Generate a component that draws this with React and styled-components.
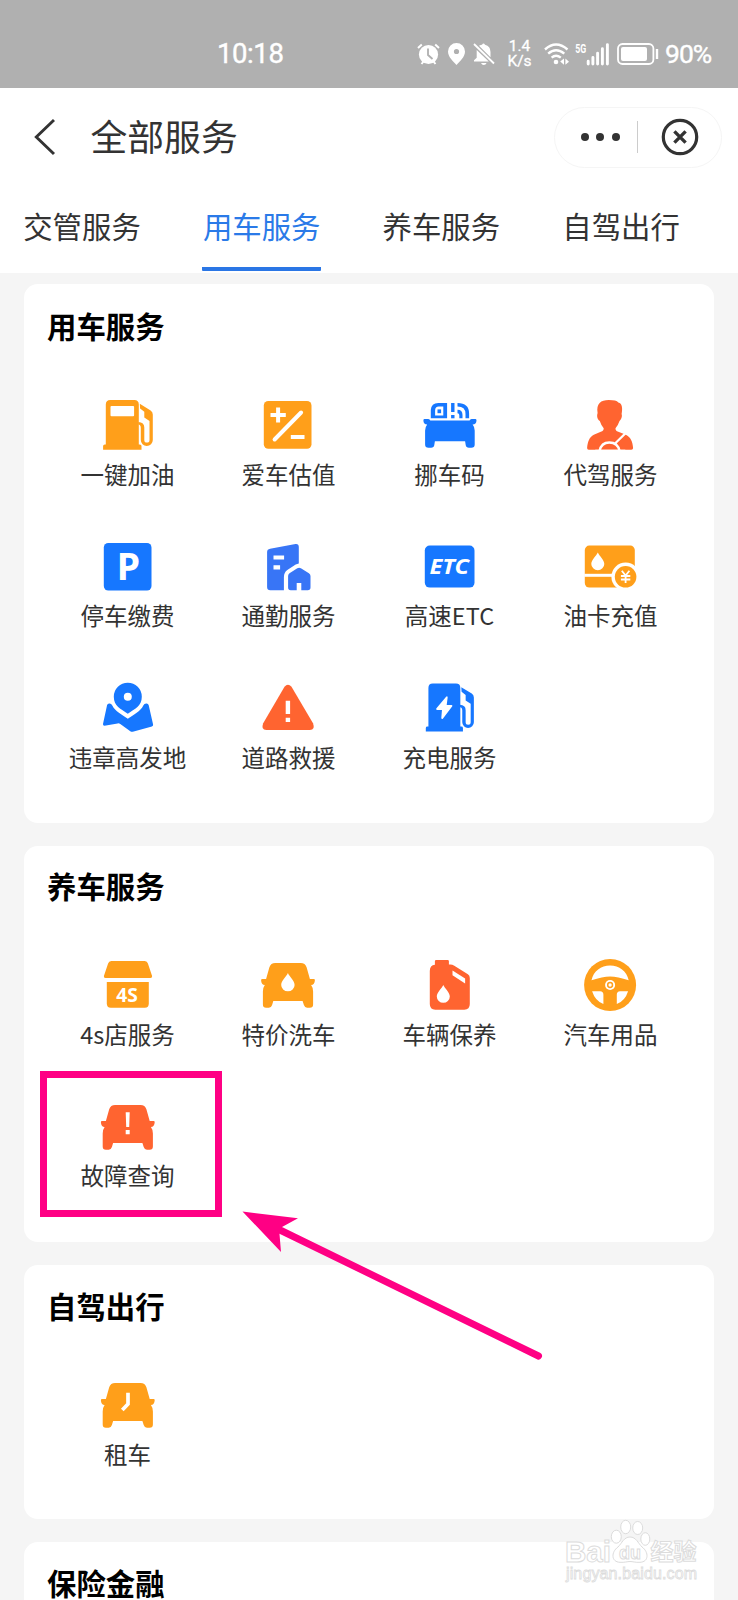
import React, { useState } from "react";
import styled, { createGlobalStyle } from "styled-components";

const ORANGE = "#ff9f1a";
const RED = "#ff6430";
const BLUE = "#1677ff";

const GlobalStyle = createGlobalStyle`
   * {
      box-sizing: border-box;
   }
   body {
      margin: 0;
      background-color: #f5f5f5;
      font-family: "Noto Sans CJK SC", sans-serif;
   }
`;

const PageStyle = {
   Wrap: styled.div`
      position: relative;
      width: 738px;
      height: 1600px;
      overflow: hidden;
      background-color: #f5f5f5;
      color: #333;
   `,
   Overlay: styled.svg`
      position: absolute;
      top: 0;
      left: 0;
      pointer-events: none;
   `,
};

const StatusStyle = {
   Bar: styled.div`
      height: 88px;
      padding: 19px 26px 0 217px;
      background-color: #b0b0b0;
      color: #fff;
      font-family: Roboto, sans-serif;
      display: flex;
      align-items: center;
      svg {
         display: block;
         flex: none;
      }
   `,
   Time: styled.div`
      flex: 1;
      font-size: 27.5px;
      line-height: 32px;
      letter-spacing: -0.4px;
      -webkit-text-stroke: 0.4px #fff;
   `,
   Tray: styled.div`
      display: flex;
      align-items: center;
      gap: 8px;
   `,
   Speed: styled.div`
      width: 25px;
      margin: 0 4px;
      display: flex;
      flex-direction: column;
      align-items: center;
      font-size: 15.5px;
      line-height: 16px;
      white-space: nowrap;
      -webkit-text-stroke: 0.3px #fff;
      span:last-child {
         margin-top: -1px;
      }
   `,
   Signal: styled.svg`
      margin-left: -2px;
   `,
   Percent: styled.div`
      width: 47px;
      margin-left: -2px;
      font-size: 26.5px;
      line-height: 32px;
      letter-spacing: -1px;
      white-space: nowrap;
      -webkit-text-stroke: 0.4px #fff;
   `,
};

const HeaderStyle = {
   Wrap: styled.header`
      height: 185px;
      background-color: #fff;
   `,
   Top: styled.div`
      height: 98px;
      padding: 0 16px 0 33px;
      display: flex;
      align-items: center;
   `,
   Title: styled.h1`
      flex: 1;
      margin: -4px 0 0 33.5px;
      font-size: 36.8px;
      line-height: 44px;
      font-weight: 400;
   `,
   Capsule: styled.div`
      width: 168px;
      height: 61px;
      border: 1px solid #f5f5f5;
      border-radius: 31px;
      display: flex;
      align-items: center;
   `,
   More: styled.div`
      width: 82px;
      padding-left: 8px;
      display: flex;
      justify-content: center;
      gap: 7.5px;
      i {
         width: 8px;
         height: 8px;
         border-radius: 50%;
         background-color: #333;
      }
   `,
   Close: styled.div`
      flex: 1;
      height: 32px;
      border-left: 1px solid #ccc;
      display: flex;
      align-items: center;
      justify-content: center;
   `,
   Tabs: styled.nav`
      height: 87px;
      padding-left: 22.5px;
      display: flex;
      gap: 60.7px;
   `,
   Tab: styled.button`
      width: 119px;
      height: 85px;
      padding: 17px 0 0;
      border: 0;
      border-bottom: 4px solid ${({ $active }) => ($active ? "#2a76e5" : "transparent")};
      border-radius: 1px;
      background: none;
      color: ${({ $active }) => ($active ? "#2a7ae8" : "#333")};
      font-family: inherit;
      font-size: 29.4px;
      line-height: 44px;
      white-space: nowrap;
      display: flex;
      justify-content: center;
      cursor: pointer;
   `,
};

const CardStyle = {
   List: styled.main`
      padding: 11px 24px 0;
   `,
   Card: styled.section`
      height: ${({ $height }) => $height}px;
      margin-bottom: 23px;
      padding: ${({ $top }) => $top}px 23px 0;
      border-radius: 14px;
      background-color: #fff;
   `,
   Title: styled.h2`
      margin: 0 0 50px;
      font-size: 29.4px;
      line-height: 40px;
      font-weight: 700;
      color: #000;
   `,
   Grid: styled.div`
      display: grid;
      grid-template-columns: repeat(4, 161px);
      grid-auto-rows: 141.7px;
   `,
   Item: styled.div`
      position: relative;
      display: flex;
      flex-direction: column;
      align-items: center;
      svg {
         display: block;
      }
   `,
   Label: styled.span`
      margin-top: 1.6px;
      font-size: 23.5px;
      line-height: 34px;
      white-space: nowrap;
   `,
   Mark: styled.div`
      position: absolute;
      top: -25.5px;
      left: -7px;
      width: 182px;
      height: 146px;
      border: 7px solid #ff0084;
   `,
};

function Drop({ x, y, s = 1 }) {
   return (
      <path
         transform={`translate(${x} ${y}) scale(${s})`}
         fill="#fff"
         d="M0 -9 C1.5 -5.5 6.5 -1.5 6.5 2.5 A6.5 6.3 0 0 1 -6.5 2.5 C-6.5 -1.5 -1.5 -5.5 0 -9Z"
      />
   );
}

function Pump({ color, children }) {
   return (
      <g fill={color}>
         <path d="M8.5 9.5 Q8.5 5 13 5 H37 Q41.5 5 41.5 9.5 V49.5 H42.5 Q44.2 49.5 44.2 51 V54.7 H5.8 V51 Q5.8 49.5 7.5 49.5 H8.5Z" />
         <path d="M42.5 8.8 L53.3 15.4 Q55.5 16.8 55.5 19.4 V45 A6 6 0 0 1 43.5 45 V33 Q43.5 29.5 41 29.5 V27 Q47 27.2 47 32.5 V45 A2.6 2.6 0 0 0 52.2 45 V26 L47 22.5 V16.8 L42.8 13.6Z" />
         {children}
      </g>
   );
}

function Car({ color, dx = 0.8, children }) {
   return (
      <g>
         <path
            transform={`translate(${dx} 0)`}
            fill={color}
            d="M17 8 H42.4 Q47 8 48.3 12.3 L51.6 24 H55.6 Q56.6 24 56.6 25.2 Q56.3 29.7 52.8 30 Q54.8 32.6 54.8 36.5 V49.5 Q54.8 52.7 51.5 52.7 H48.8 Q46.5 52.7 45.6 50 L44.3 46 H15 L13.8 50 Q13 52.7 10.6 52.7 H7.8 Q4.6 52.7 4.6 49.5 V36.5 Q4.6 32.6 6.5 30 Q3 29.7 2.8 25.2 Q2.8 24 3.8 24 H7.8 L11.1 12.3 Q12.4 8 17 8Z"
         />
         {children}
      </g>
   );
}

const icons = {
   fuel: (
      <Pump color={ORANGE}>
         <rect x="13.2" y="11" width="23.6" height="10.3" rx="1" fill="#fff" />
      </Pump>
   ),
   value: (
      <g stroke="#fff" strokeWidth="4" fill="none">
         <rect x="5.5" y="6" width="47.7" height="47.7" rx="4.5" fill={ORANGE} stroke="none" />
         <path d="M12.2 20 H27.5 M19.8 12.4 V27.6 M32.5 42 H46.2" />
         <path d="M16.3 44.5 L42.8 17.5" strokeLinecap="round" />
      </g>
   ),
   moveCode: (
      <g fill={BLUE}>
         <path
            fillRule="evenodd"
            d="M27.8 8 V23.3 H11.5 V15 Q12 8 19 8Z M15.8 20.4 H24 V11.6 H19.5 Q15.8 11.6 15.8 15.5Z"
         />
         <rect x="18.2" y="14.4" width="3.6" height="3.8" />
         <rect x="31.8" y="8" width="3.4" height="9" />
         <rect x="31.8" y="20" width="3.4" height="3.3" />
         <path d="M38.2 8 Q49.8 8 49.8 18.5 V23.3 H46.2 V19 Q46.2 11.6 38.2 11.6Z" />
         <path d="M38.2 14.8 Q43.2 14.8 43.2 20 V23.3 H40 V20 Q40 18.4 38.2 18.2Z" />
         <path d="M5.2 24 H9 Q10.5 24 11 25.6 H50.3 Q50.8 24 52.3 24 H56 Q57.2 24 57.2 25.4 Q57 29.3 53.3 29.5 Q55.4 32 55.4 35.5 V49.5 Q55.4 52.7 52 52.7 H49.6 Q46.8 52.7 46.4 50 L45.8 46.2 H15.6 L15 50 Q14.6 52.7 11.8 52.7 H9.2 Q5.8 52.7 5.8 49.5 V35.5 Q5.8 32 7.9 29.5 Q4.2 29.3 4.1 25.4 Q4.1 24 5.2 24Z" />
      </g>
   ),
   driver: (
      <g>
         <path
            fill={RED}
            d="M17.3 18 C15.8 8.5 20.5 5 28.5 5 Q36 5 38 7.4 C42 8 42.4 13.5 41.3 19 C42.3 21.5 40.6 25 39.2 26 Q37.5 31 35.2 33.2 Q35 35.8 38 36.8 L45 39.6 C50.3 41.8 52.4 47 52.8 53 Q52.8 54.7 51 54.7 H8.4 Q6.8 54.7 6.8 53 C7.3 47 9 42 13.5 39.8 L20.5 36.8 Q23.5 35.8 23.4 33.2 Q21 30.8 19.5 26 C17.8 25 16 22 17.3 18Z"
         />
         <path d="M19.2 56 Q21 47.5 29 47.5 Q37.5 47.5 39.3 56 M47 36.5 L35 48.2" fill="none" stroke="#fff" strokeWidth="2.3" />
         <path d="M15 54.7 H45 V60 H15Z" fill="#fff" />
      </g>
   ),
   parking: (
      <g>
         <rect x="6.5" y="6" width="47.7" height="47.6" rx="4.5" fill={BLUE} />
         <text x="31.2" y="43.2" fill="#fff" fontFamily="Noto Sans, sans-serif" fontWeight="700" fontSize="37.5" textAnchor="middle">
            P
         </text>
      </g>
   ),
   commute: (
      <g fill="#3875f6">
         <path d="M11.8 11.7 L37.2 7.1 Q40.5 6.7 40.5 10 V26.4 Q38.8 26.6 37.4 27.5 L29 33 Q25.7 35.4 25.6 40 V53.3 H12 Q8.8 53.3 8.8 50 V15 Q8.8 12.3 11.8 11.7Z" />
         <path d="M15.2 18.6 H25.8 V22.6 H15.2Z M15.2 28.3 H21.8 V32.6 H15.2Z" fill="#fff" />
         <path d="M39 31.2 Q40.8 30.2 42.6 31.2 L50.6 36.2 Q52.2 37.2 52.2 39 V50.5 Q52.2 53.3 49.4 53.3 H43 V46 H38.4 V53.3 H32.4 Q29.8 53.3 29.8 50.5 V39 Q29.8 37.2 31.2 36.2Z" />
      </g>
   ),
   etc: (
      <g>
         <rect x="5.5" y="8.6" width="49.7" height="42" rx="5" fill={BLUE} />
         <text x="10.2" y="37.2" fill="#fff" fontFamily="Noto Sans, sans-serif" fontWeight="700" fontStyle="italic" fontSize="21.3" textLength="39.5" lengthAdjust="spacingAndGlyphs">
            ETC
         </text>
      </g>
   ),
   oilCard: (
      <g>
         <rect x="4.5" y="8.6" width="50" height="42" rx="4.5" fill={ORANGE} />
         <path d="M4 38.3 H34" stroke="#fff" strokeWidth="3" />
         <Drop x={17.5} y={24.4} />
         <circle cx="45.3" cy="39.8" r="14.2" fill="#fff" />
         <circle cx="45.3" cy="39.8" r="10.8" fill={ORANGE} />
         <path d="M41.5 33.8 L45.3 38.5 L49.1 33.8 M45.3 38.5 V46 M40.6 39 H50 M40.6 42.5 H50" stroke="#fff" strokeWidth="1.8" fill="none" />
      </g>
   ),
   map: (
      <g fill={BLUE}>
         <path
            fillRule="evenodd"
            d="M30.5 4.7 A14 14 0 0 1 44.5 18.7 C44.5 28 37.5 30.7 30.5 35.8 C23.5 30.7 16.5 28 16.5 18.7 A14 14 0 0 1 30.5 4.7Z M30.5 14.7 A4 4 0 1 0 30.5 22.7 A4 4 0 1 0 30.5 14.7Z"
         />
         <path d="M11.8 25.4 Q14 25.2 15 27.4 C18 33.5 24.5 36.3 30.5 40.8 C36.5 36.3 43 33.5 46 27.4 Q47 25.2 49.3 25.4 Q51 25.4 51.4 27.2 L55.8 46.6 Q56 48 54.6 48.4 L35.5 53.7 Q34 54 33 53.2 L23 46 Q21.8 45.2 20.3 45.4 L7.2 47.8 Q5.4 47.8 5.7 46 L9.8 27 Q10.3 25.4 11.8 25.4Z" />
      </g>
   ),
   warning: (
      <g>
         <path
            fill={RED}
            d="M26.2 8.8 Q29.6 4.6 33.2 8.8 L54.7 45.3 Q57.2 51.8 51.6 52 H8 Q2.4 51.8 4.9 45.3Z"
         />
         <path d="M27.4 22.7 H31.8 V36 H27.4Z M27.4 39.7 H31.8 V44 H27.4Z" fill="#fff" />
      </g>
   ),
   charge: (
      <g transform="translate(.9 .7) scale(.967)">
         <Pump color={BLUE}>
            <path d="M26.8 18.6 L16.6 30.8 Q16 32.3 17.5 32.3 H22.5 L21.8 41 Q22.5 42.4 23.6 41.2 L33.2 28.6 Q33.6 27.2 32.3 27.2 H27.4 L28.4 19.4 Q28.2 17.4 26.8 18.6Z" fill="#fff" />
         </Pump>
      </g>
   ),
   shop: (
      <g fill={ORANGE}>
         <path d="M14 6 H47.5 Q50 6 50.6 8.5 L54.8 21 Q55 23 53.2 23 H8.2 Q6.2 23 6.6 21 L10.8 8.5 Q11.5 6 14 6Z" />
         <path d="M9.5 27 H51.5 V48.5 Q51.5 52.7 47.5 52.7 H13.5 Q9.5 52.7 9.5 48.5Z" />
         <text x="29.7" y="47" fill="#fff" fontFamily="Noto Sans, sans-serif" fontWeight="700" fontSize="19.2" textAnchor="middle">
            4S
         </text>
      </g>
   ),
   wash: (
      <Car color={ORANGE} dx={0}>
         <Drop x={29.6} y={27.3} s={1.03} />
      </Car>
   ),
   oilCan: (
      <g>
         <path
            fill={RED}
            d="M16.8 5 H28.4 Q29.6 5 29.6 6.3 V9.6 H31 Q33 9.6 35 10.8 L48.6 19.3 Q50.5 20.6 50.5 23 V49 Q50.5 54.7 45 54.7 H16 Q10.5 54.7 10.5 49 V16 Q10.5 10.3 15.6 9.8 V6.3 Q15.6 5 16.8 5Z"
         />
         <path d="M33.2 15.6 L45.8 23.6 V28.6 L33.2 20.2Z" fill="#fff" />
         <Drop x={24} y={39} />
      </g>
   ),
   wheel: (
      <g>
         <circle cx="29.8" cy="30" r="26" fill={ORANGE} />
         <path
            transform="translate(.3 .3)"
            fill="#fff"
            d="M10.9 25 C12.8 16 20.5 10.3 29.5 10.3 C38.5 10.3 46.2 16 48.1 25 Q37 21.2 29.5 21.2 Q22 21.2 10.9 25Z M11.5 36 H19.5 Q22.8 36 22.8 39.5 V48.8 Q14.5 45.6 11.5 36Z M47.5 36 H39.5 Q36.2 36 36.2 39.5 V48.8 Q44.5 45.6 47.5 36Z"
         />
         <circle cx="29.8" cy="30" r="5" fill="#fff" />
         <circle cx="29.8" cy="30" r="2.4" fill="none" stroke={ORANGE} strokeWidth="1.5" />
      </g>
   ),
   fault: (
      <Car color={RED}>
         <path d="M28.4 15.3 H32.4 L31.9 30 H28.9Z M28.4 33 H32.4 V37.2 H28.4Z" fill="#fff" />
      </Car>
   ),
   rent: (
      <Car color={ORANGE}>
         <path d="M30.7 17.8 V29 L25 35" stroke="#fff" strokeWidth="3.7" fill="none" />
      </Car>
   ),
};

const tabs = ["交管服务", "用车服务", "养车服务", "自驾出行"];

const sections = [
   {
      title: "用车服务",
      height: 539,
      top: 21,
      items: [
         { icon: "fuel", label: "一键加油" },
         { icon: "value", label: "爱车估值" },
         { icon: "moveCode", label: "挪车码" },
         { icon: "driver", label: "代驾服务" },
         { icon: "parking", label: "停车缴费" },
         { icon: "commute", label: "通勤服务" },
         { icon: "etc", label: "高速ETC" },
         { icon: "oilCard", label: "油卡充值" },
         { icon: "map", label: "违章高发地" },
         { icon: "warning", label: "道路救援" },
         { icon: "charge", label: "充电服务" },
      ],
   },
   {
      title: "养车服务",
      height: 396,
      top: 19,
      items: [
         { icon: "shop", label: "4s店服务" },
         { icon: "wash", label: "特价洗车" },
         { icon: "oilCan", label: "车辆保养" },
         { icon: "wheel", label: "汽车用品" },
         { icon: "fault", label: "故障查询", marked: true },
      ],
   },
   {
      title: "自驾出行",
      height: 254,
      top: 20,
      items: [{ icon: "rent", label: "租车" }],
   },
   { title: "保险金融", height: 254, top: 20, items: [] },
];

function StatusBar() {
   return (
      <StatusStyle.Bar>
         <StatusStyle.Time>10:18</StatusStyle.Time>
         <StatusStyle.Tray>
            {/* 闹钟 */}
            <svg width="23" height="22" viewBox="0 0 23 22">
               <circle cx="11.5" cy="11.5" r="9.6" fill="#fff" />
               <path d="M1 5 L4.8 1.5 M22 5 L18.2 1.5 M4.5 21 L6.5 18.5 M18.5 21 L16.5 18.5" stroke="#fff" strokeWidth="2" />
               <path d="M11 5.5 V12 L15.5 16" stroke="#b0b0b0" strokeWidth="1.8" fill="none" />
            </svg>
            {/* 定位 */}
            <svg width="17" height="22" viewBox="0 0 17 22">
               <path
                  fillRule="evenodd"
                  fill="#fff"
                  d="M8.5 0 A8.5 8.5 0 0 1 17 8.5 C17 14 12 18 8.5 22 C5 18 0 14 0 8.5 A8.5 8.5 0 0 1 8.5 0Z M8.5 5.9 A2.6 2.6 0 1 0 8.5 11.1 A2.6 2.6 0 1 0 8.5 5.9Z"
               />
            </svg>
            {/* 静音 */}
            <svg width="22" height="22" viewBox="0 0 22 22">
               <path d="M6 2.8 Q8 1.8 9 1.7 Q10.5 -.8 12 1.7 Q17.5 3 17.5 9 V14.2Z M3.7 7 L15.8 18.5 H1 V17.2 L3.7 14.8Z M8 20 H13.6 Q12.8 22 10.8 22 Q8.8 22 8 20Z" fill="#fff" />
               <path d="M1 1 L21 20.5" stroke="#fff" strokeWidth="1.8" />
            </svg>
            <StatusStyle.Speed>
               <span>1.4</span>
               <span>K/s</span>
            </StatusStyle.Speed>
            {/* Wi-Fi */}
            <svg width="25" height="22" viewBox="0 0 25 22">
               <path d="M1 6.5 Q12 -3.5 23.5 6.5 M4.2 10.6 Q12 3.8 20.3 10.6 M7.6 14.6 Q12 10.8 16.8 14.6" stroke="#fff" strokeWidth="2.4" fill="none" />
               <circle cx="12" cy="19" r="2.3" fill="#fff" />
               <path d="M20 15.6 V21.8 L16.2 18.6Z M21.4 15.6 V21.8 L25 18.8Z" fill="#fff" />
            </svg>
            <StatusStyle.Signal width="34" height="26" viewBox="-0.6 -2 34 26">
               <text x="-0.4" y="9.6" fill="#fff" fontFamily="Roboto, sans-serif" fontWeight="700" fontSize="12.5" textLength="11" lengthAdjust="spacingAndGlyphs">
                  5G
               </text>
               <path d="M12.6 21 V18.2 M17.3 21 V14.4 M22 21 V10.2 M26.8 21 V5.8 M31.8 21 V1.6" stroke="#fff" strokeWidth="2.9" strokeLinecap="round" />
            </StatusStyle.Signal>
            <svg width="42" height="22" viewBox="0.5 0 42 22">
               <rect x="1.5" y="1" width="35.4" height="20" rx="4.5" fill="none" stroke="#fff" strokeWidth="1.8" />
               <rect x="4.5" y="4" width="26" height="14" rx="2" fill="#fff" />
               <path d="M40.5 6 V16" stroke="#fff" strokeWidth="2.4" />
            </svg>
            <StatusStyle.Percent>90%</StatusStyle.Percent>
         </StatusStyle.Tray>
      </StatusStyle.Bar>
   );
}

function Header() {
   const [active, setActive] = useState(1);

   return (
      <HeaderStyle.Wrap>
         <HeaderStyle.Top>
            <svg width="24" height="38" viewBox="0 0 24 38">
               <path d="M21 2 L3.3 19 L21 36" fill="none" stroke="#333" strokeWidth="2.9" />
            </svg>
            <HeaderStyle.Title>全部服务</HeaderStyle.Title>
            <HeaderStyle.Capsule>
               <HeaderStyle.More>
                  <i />
                  <i />
                  <i />
               </HeaderStyle.More>
               <HeaderStyle.Close>
                  <svg width="38" height="38" viewBox="0 0 38 38">
                     <circle cx="19" cy="19" r="16.7" fill="none" stroke="#333" strokeWidth="3.2" />
                     <path d="M13.4 13.4 L24.6 24.6 M24.6 13.4 L13.4 24.6" stroke="#333" strokeWidth="3.4" />
                  </svg>
               </HeaderStyle.Close>
            </HeaderStyle.Capsule>
         </HeaderStyle.Top>
         <HeaderStyle.Tabs>
            {tabs.map((tab, index) => (
               <HeaderStyle.Tab key={tab} $active={index === active} onClick={() => setActive(index)}>
                  {tab}
               </HeaderStyle.Tab>
            ))}
         </HeaderStyle.Tabs>
      </HeaderStyle.Wrap>
   );
}

function ServiceCard({ title, height, top, items }) {
   return (
      <CardStyle.Card $height={height} $top={top}>
         <CardStyle.Title>{title}</CardStyle.Title>
         <CardStyle.Grid>
            {items.map(({ icon, label, marked }) => (
               <CardStyle.Item key={label}>
                  <svg width="60" height="60" viewBox="0.7 0 60 60">
                     {icons[icon]}
                  </svg>
                  <CardStyle.Label>{label}</CardStyle.Label>
                  {marked && <CardStyle.Mark />}
               </CardStyle.Item>
            ))}
         </CardStyle.Grid>
      </CardStyle.Card>
   );
}

function App() {
   return (
      <PageStyle.Wrap>
         <GlobalStyle />
         <StatusBar />
         <Header />
         <CardStyle.List>
            {sections.map((section) => (
               <ServiceCard key={section.title} {...section} />
            ))}
         </CardStyle.List>

         {/* 箭头 + 水印 */}
         <PageStyle.Overlay width="738" height="1600" viewBox="0 0 738 1600">
            <path d="M281 1230.5 L538.5 1356" stroke="#ff0084" strokeWidth="7" strokeLinecap="round" />
            <path d="M242.5 1211.5 L298 1218.3 L282 1227 L279.5 1234 L281 1252Z" fill="#ff0084" />
            <g fill="#fff" stroke="#dcdcdc" strokeWidth="1">
               <g fontFamily="Liberation Sans, sans-serif" fontWeight="700" fontSize="30">
                  <text x="565" y="1561.5" textLength="46" lengthAdjust="spacingAndGlyphs">
                     Bai
                  </text>
                  <path d="M630 1537 C636 1537 638 1543 642 1547 C649 1552 649 1562 640 1562.3 C635 1562.6 633 1561.5 630 1561.5 C627 1561.5 625 1562.6 620 1562.3 C611 1562 611 1552 618 1547 C622 1543 624 1537 630 1537Z" />
                  <text x="619" y="1558.5" fontSize="19" textLength="22" lengthAdjust="spacingAndGlyphs">
                     du
                  </text>
                  <text x="650.5" y="1560" fontFamily="Noto Sans CJK SC, sans-serif" fontSize="23" textLength="46">
                     经验
                  </text>
               </g>
               <ellipse cx="616.3" cy="1536.7" rx="5" ry="6.5" />
               <ellipse cx="625.7" cy="1527" rx="5" ry="6.7" />
               <ellipse cx="637.7" cy="1528" rx="5" ry="6.5" />
               <ellipse cx="645.3" cy="1539" rx="4.5" ry="6.3" />
               <text x="566" y="1578.5" fontFamily="Liberation Sans, sans-serif" fontSize="16" strokeWidth=".8" textLength="131">
                  jingyan.baidu.com
               </text>
            </g>
         </PageStyle.Overlay>
      </PageStyle.Wrap>
   );
}

export default App;
